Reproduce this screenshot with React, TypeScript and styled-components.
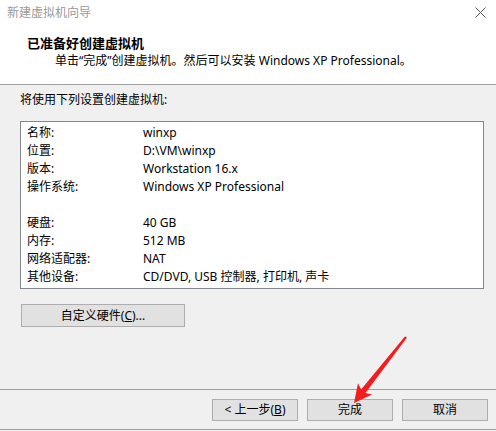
import React from "react";
import styled, { createGlobalStyle } from "styled-components";

const Global = createGlobalStyle`
  html, body {
    margin: 0;
    padding: 0;
    background: #f0f0f0;
  }
  body {
    font-family: "Noto Sans", "Noto Sans CJK SC", sans-serif;
    font-size: 12px;
    color: #000;
  }
`;

const Dialog = styled.div`
  position: relative;
  width: 496px;
  height: 430px;
  display: flex;
  flex-direction: column;
  background: #f0f0f0;
  border-bottom: 1px solid #a0a0a0;
  box-sizing: border-box;
`;

const Header = styled.div`
  background: #fff;
  border-bottom: 1px solid #a0a0a0;
  height: 85px;
  box-sizing: border-box;
  display: flex;
  flex-direction: column;
`;

const TitleBar = styled.div`
  height: 26px;
  display: flex;
  align-items: center;
  justify-content: space-between;
  padding: 0 10px 0 7px;
  color: #999;
  line-height: 18px;
`;

const CloseIcon = styled.svg`
  width: 11px;
  height: 11px;
  margin-top: -1px;
`;

const HeaderText = styled.div`
  padding: 8px 0 0 27px;
  line-height: 18px;
`;

const HeaderTitle = styled.div`
  font-weight: 700;
  font-size: 13px;
`;

const HeaderSub = styled.div`
  padding-left: 28px;
`;

const Body = styled.div`
  flex: 1;
  padding: 6px 12px 0 20px;
  display: flex;
  flex-direction: column;
  align-items: flex-start;
`;

const Caption = styled.div`
  line-height: 18px;
`;

const SummaryBox = styled.div`
  margin-top: 12px;
  align-self: stretch;
  background: #fff;
  border: 1px solid #828790;
  padding: 2px 0 2px 6px;
  display: grid;
  grid-template-columns: 116px 1fr;
  grid-auto-rows: 18px;
  line-height: 18px;
  white-space: nowrap;
`;

const Spacer = styled.div`
  grid-column: 1 / span 2;
`;

const Button = styled.button<{ $width: number }>`
  width: ${(p) => p.$width}px;
  height: ${(p) => (p.$width > 100 ? 23 : 22)}px;
  box-sizing: border-box;
  background: #e1e1e1;
  border: 1px solid #adadad;
  border-radius: 0;
  font-family: inherit;
  font-size: 12px;
  color: #000;
  padding: 0;
  line-height: 18px;
  display: flex;
  align-items: center;
  justify-content: center;
`;

const WideButton = styled(Button)`
  margin: 15px 0 0 1px;
`;

const Key = styled.span`
  text-decoration: underline;
`;

const Footer = styled.div`
  height: 40px;
  box-sizing: border-box;
  border-top: 1px solid #a0a0a0;
  padding: 9px 8px 0 0;
  display: flex;
  justify-content: flex-end;
  align-items: flex-start;
  gap: 9px;
`;

const Pointer = styled.svg`
  position: absolute;
  left: 0;
  top: 0;
  width: 496px;
  height: 431px;
  pointer-events: none;
`;

const rows: [string, string][] = [
  ["名称:", "winxp"],
  ["位置:", "D:\\VM\\winxp"],
  ["版本:", "Workstation 16.x"],
  ["操作系统:", "Windows XP Professional"],
];

const hardware: [string, string][] = [
  ["硬盘:", "40 GB"],
  ["内存:", "512 MB"],
  ["网络适配器:", "NAT"],
  ["其他设备:", "CD/DVD, USB 控制器, 打印机, 声卡"],
];

export default function App() {
  return (
    <>
      <Global />
      <Dialog>
        <Header>
          <TitleBar>
            <span>新建虚拟机向导</span>
            <CloseIcon viewBox="0 0 11 11">
              <path d="M0.5 0.5 L10.5 10.5 M10.5 0.5 L0.5 10.5" stroke="#555" strokeWidth="1" fill="none" />
            </CloseIcon>
          </TitleBar>
          <HeaderText>
            <HeaderTitle>已准备好创建虚拟机</HeaderTitle>
            <HeaderSub>单击“完成”创建虚拟机。然后可以安装 Windows XP Professional。</HeaderSub>
          </HeaderText>
        </Header>
        <Body>
          <Caption>将使用下列设置创建虚拟机:</Caption>
          <SummaryBox>
            {rows.map(([k, v]) => (
              <React.Fragment key={k}>
                <span>{k}</span>
                <span>{v}</span>
              </React.Fragment>
            ))}
            <Spacer />
            {hardware.map(([k, v]) => (
              <React.Fragment key={k}>
                <span>{k}</span>
                <span>{v}</span>
              </React.Fragment>
            ))}
          </SummaryBox>
          <WideButton $width={164}>
            自定义硬件(<Key>C</Key>)...
          </WideButton>
        </Body>
        <Footer>
          <Button $width={86}>
            &lt; 上一步(<Key>B</Key>)
          </Button>
          <Button $width={86}>完成</Button>
          <Button $width={86}>取消</Button>
        </Footer>
        <Pointer viewBox="0 0 496 431">
          <polygon
            points="354,403 372.2,394.5 365.5,392.9 406.9,337.7 405.1,336.3 361.1,389.5 358,383.3"
            fill="#f41c1c"
          />
        </Pointer>
      </Dialog>
    </>
  );
}
